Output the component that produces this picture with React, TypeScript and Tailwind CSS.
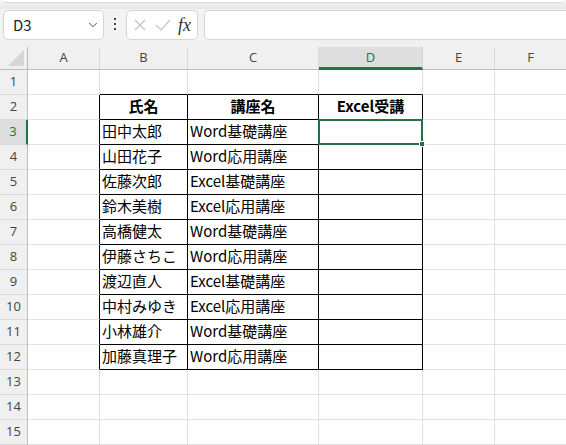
import { ChevronDown } from "lucide-react";

const COLS = [
  { key: "A", w: "w-[72px]" },
  { key: "B", w: "w-[88px]" },
  { key: "C", w: "w-[131px]" },
  { key: "D", w: "w-[104px]" },
  { key: "E", w: "w-[72px]" },
  { key: "F", w: "w-[72px]" },
];

const DATA: Record<number, string[]> = {
  2: ["氏名", "講座名", "Excel受講"],
  3: ["田中太郎", "Word基礎講座", ""],
  4: ["山田花子", "Word応用講座", ""],
  5: ["佐藤次郎", "Excel基礎講座", ""],
  6: ["鈴木美樹", "Excel応用講座", ""],
  7: ["高橋健太", "Word基礎講座", ""],
  8: ["伊藤さちこ", "Word応用講座", ""],
  9: ["渡辺直人", "Excel基礎講座", ""],
  10: ["中村みゆき", "Excel応用講座", ""],
  11: ["小林雄介", "Word基礎講座", ""],
  12: ["加藤真理子", "Word応用講座", ""],
};

const ROWS = Array.from({ length: 15 }, (_, i) => i + 1);

function FormulaBar() {
  return (
    <div className="flex h-[31px] items-start bg-[#f3f3f3] pt-px">
      <div className="ml-[3px] flex h-[30px] w-[101px] items-center justify-between rounded-[5px] border border-[#d4d4d4] bg-white pl-[9px] pr-[3px]">
        <span className="text-[15px] text-[#1f1f1f]">D3</span>
        <ChevronDown className="h-[14px] w-[14px] text-[#444]" strokeWidth={1.6} />
      </div>
      <div className="flex w-[22px] flex-col items-center justify-center gap-[3px] self-stretch pb-[2px]">
        <span className="h-[2px] w-[2px] bg-[#444]" />
        <span className="h-[2px] w-[2px] bg-[#444]" />
        <span className="h-[2px] w-[2px] bg-[#444]" />
      </div>
      <div className="flex h-[30px] w-[72px] items-center rounded-[5px] border border-[#d4d4d4] bg-white pl-[6px]">
        <svg width="14" height="14" viewBox="0 0 14 14" className="mr-[8px]">
          <path d="M2 2 L12 12 M12 2 L2 12" stroke="#c4c4c4" strokeWidth="1.2" fill="none" />
        </svg>
        <svg width="16" height="14" viewBox="0 0 16 14" className="mr-[7px]">
          <path d="M1 7 L6 12 L15 2" stroke="#c4c4c4" strokeWidth="1.2" fill="none" />
        </svg>
        <span className="font-['Liberation_Serif',serif] text-[18px] italic leading-none text-[#333]">fx</span>
      </div>
      <div className="ml-[6px] h-[30px] flex-1 rounded-l-[5px] border border-r-0 border-[#d4d4d4] bg-white" />
    </div>
  );
}

function Cell({ row, col }: { row: number; col: number }) {
  const inTable = row >= 2 && row <= 12 && col >= 1 && col <= 3;
  const text = DATA[row]?.[col - 1] ?? "";
  const rightBlack = inTable || (col === 0 && row >= 2 && row <= 12);
  const bottomBlack = inTable || (row === 1 && col >= 1 && col <= 3);
  const selected = row === 3 && col === 3;
  return (
    <div
      className={[
        COLS[col].w,
        "relative flex h-full shrink-0 items-center border-r border-b pb-[2px]",
        rightBlack ? "border-r-black" : "border-r-[#e1e1e1]",
        bottomBlack ? "border-b-black" : "border-b-[#e1e1e1]",
        row === 2 ? "justify-center font-bold" : "pl-[2px]",
        selected ? "z-10" : "",
      ].join(" ")}
    >
      {text && <span className="whitespace-nowrap text-[15px] text-black">{text}</span>}
      {selected && (
        <div className="absolute -left-px -top-px h-[26px] w-[105px] border-2 border-[#217346]">
          <span className="absolute -bottom-[4px] -right-[4px] h-[6px] w-[6px] border border-white bg-[#217346]" />
        </div>
      )}
    </div>
  );
}

export default function App() {
  return (
    <div className="h-[445px] w-[566px] overflow-hidden bg-white font-['Noto_Sans_CJK_JP',sans-serif]">
      <div className="h-[9px] bg-gradient-to-b from-[#f7f7f7] to-[#e6e6e6] px-[3px]">
        <div className="h-[2px] rounded-b-[3px] bg-white shadow-[0_1px_1px_rgba(0,0,0,0.12)]" />
      </div>
      <FormulaBar />
      <div className="h-[7px] bg-[#f0f0f0]" />
      <div className="flex h-[23px] border-b border-[#bdbdbd] bg-[#f0f0f0] font-['Open_Sans',sans-serif] text-[13px] text-[#444]">
        <div className="relative w-[28px] shrink-0 border-r border-[#bdbdbd]">
          <svg width="16" height="16" viewBox="0 0 16 16" className="absolute bottom-[3px] right-[3px]">
            <path d="M16 0 L16 16 L0 16 Z" fill="#d6d6d6" />
          </svg>
        </div>
        {COLS.map((c) =>
          c.key === "D" ? (
            <div
              key={c.key}
              className={`${c.w} -mb-px flex shrink-0 items-center justify-center border-r border-b-[3px] border-r-[#d4d4d4] border-b-[#217346] bg-[#dedede] pt-[2px] text-[#217346]`}
            >
              {c.key}
            </div>
          ) : (
            <div key={c.key} className={`${c.w} flex shrink-0 items-center justify-center border-r border-[#d9d9d9]`}>
              {c.key}
            </div>
          )
        )}
      </div>
      {ROWS.map((r) => (
        <div key={r} className="flex h-[25px]">
          <div
            className={[
              "flex w-[28px] shrink-0 items-center justify-center border-b border-b-[#d9d9d9] font-['Open_Sans',sans-serif] text-[13px]",
              r === 3
                ? "border-r-[2px] border-r-[#217346] bg-[#dedede] text-[#217346]"
                : "border-r border-r-[#bdbdbd] bg-[#f0f0f0] text-[#444]",
            ].join(" ")}
          >
            {r}
          </div>
          {COLS.map((_, ci) => (
            <Cell key={ci} row={r} col={ci} />
          ))}
        </div>
      ))}
    </div>
  );
}
